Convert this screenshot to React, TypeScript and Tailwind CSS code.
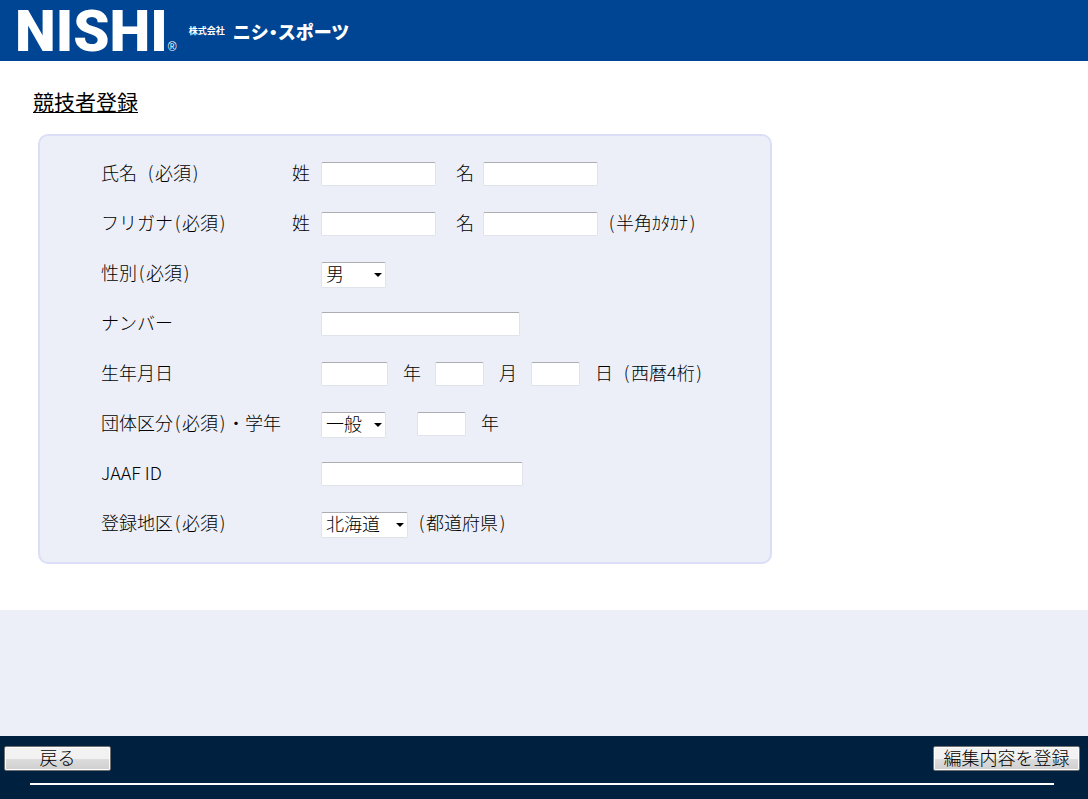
import { useState } from 'react'
import type { ReactNode } from 'react'

const genders = ['男', '女']
const categories = ['一般', '大学', '高校', '中学', '小学']
const prefectures = ['北海道', '青森', '岩手', '宮城', '東京', '大阪', '福岡']

const inputClass =
  'h-6 rounded-[2px] border border-[#e0e3ea] border-t-[#abadb3] bg-white px-1 outline-none focus:border-[#5794bf]'

// half-width characters, half the advance of a kanji
function Half({ children }: { children: ReactNode }) {
  return <span className="inline-block w-[9px] text-center">{children}</span>
}

function Required() {
  return (
    <>
      <Half>(</Half>必須<Half>)</Half>
    </>
  )
}

interface RowProps {
  label: ReactNode
  htmlFor: string
  hint?: string
  children: ReactNode
}

function Row({ label, htmlFor, hint, children }: RowProps) {
  return (
    <div className="flex h-[50px] items-center">
      <label htmlFor={htmlFor} className="w-[191px] shrink-0 pb-1 whitespace-nowrap">
        {label}
      </label>
      <label htmlFor={htmlFor} className="w-[29px] shrink-0 pb-1">
        {hint}
      </label>
      {children}
    </div>
  )
}

interface SelectProps {
  id: string
  options: string[]
  width: string
}

function Select({ id, options, width }: SelectProps) {
  const [value, setValue] = useState(options[0])

  return (
    <div className={`relative shrink-0 ${width}`}>
      <select
        id={id}
        value={value}
        onChange={(e) => setValue(e.target.value)}
        className="h-[26px] w-full appearance-none rounded-[2px] border border-[#e0e3ea] border-t-[#abadb3] bg-white pb-1 pl-1 leading-5 outline-none"
      >
        {options.map((option) => (
          <option key={option}>{option}</option>
        ))}
      </select>
      <svg className="pointer-events-none absolute top-3 right-1 h-1 w-2" viewBox="0 0 8 4">
        <path d="M0 0h8L4 4z" fill="black" />
      </svg>
    </div>
  )
}

function NameFields({ prefix, children }: { prefix: string; children?: ReactNode }) {
  return (
    <>
      <input id={`${prefix}-last`} type="text" className={`${inputClass} w-[115px]`} />
      <label htmlFor={`${prefix}-first`} className="mr-[9px] ml-5 pb-1">
        名
      </label>
      <input id={`${prefix}-first`} type="text" className={`${inputClass} w-[115px]`} />
      {children}
    </>
  )
}

function Header() {
  return (
    <header className="flex h-[61px] items-center bg-[#004593] pl-[15px] text-white">
      <span className="font-['Roboto',sans-serif] text-[58px] font-black">NISHI</span>
      <span className="mt-8 font-['Liberation_Sans',sans-serif] text-[12px]">®</span>
      <span className="ml-3 text-[9px] font-bold">株式会社</span>
      <span className="ml-2 text-[18px] font-black">
        ニシ<span className="[font-feature-settings:'halt']">・</span>スポーツ
      </span>
    </header>
  )
}

function Footer() {
  const buttonClass =
    'h-[25px] rounded-[2px] border border-[#707070] bg-linear-to-b from-[#f2f2f2] from-50% via-[#dddddd] via-50% to-[#cfcfcf] pb-1 leading-5 text-black shadow-[inset_0_0_0_1px_#fcfcfc]'

  return (
    <footer className="h-[63px] bg-[#00203f] pt-[10px]">
      <div className="flex justify-between pr-2 pl-1">
        <button type="button" className={`${buttonClass} w-[107px]`}>
          戻る
        </button>
        <button type="submit" form="athlete-form" className={`${buttonClass} w-[147px]`}>
          編集内容を登録
        </button>
      </div>
      <hr className="mt-3 mr-[34px] ml-[30px] border-t-2 border-white" />
    </footer>
  )
}

export default function App() {
  return (
    <div className="flex min-h-screen flex-col bg-[#eceff7] font-['Noto_Sans_CJK_JP',sans-serif] text-[18px] leading-6 font-light text-black">
      <Header />

      <main className="bg-white px-[38px] pt-[26px] pb-[46px]">
        <h1 className="-ml-[5px] text-[21px] leading-7 font-normal underline decoration-1 underline-offset-2">
          競技者登録
        </h1>

        <form
          id="athlete-form"
          onSubmit={(e) => e.preventDefault()}
          className="mt-[19px] w-full max-w-[734px] rounded-[10px] border-2 border-[#dcdef8] bg-[#eceff7] py-[13px] pl-[61px]"
        >
          <Row label={<>氏名<Half>&nbsp;</Half><Required /></>} htmlFor="name-last" hint="姓">
            <NameFields prefix="name" />
          </Row>

          <Row label={<>フリガナ<Required /></>} htmlFor="kana-last" hint="姓">
            <NameFields prefix="kana">
              <span className="ml-[9px] pb-1"><Half>(</Half>半角ｶﾀｶﾅ<Half>)</Half></span>
            </NameFields>
          </Row>

          <Row label={<>性別<Required /></>} htmlFor="gender">
            <Select id="gender" options={genders} width="w-[65px]" />
          </Row>

          <Row label="ナンバー" htmlFor="number">
            <input id="number" type="text" className={`${inputClass} w-[199px]`} />
          </Row>

          <Row label="生年月日" htmlFor="birth-year">
            <input id="birth-year" type="text" className={`${inputClass} w-[67px]`} />
            <label htmlFor="birth-year" className="mr-[14px] ml-[15px] pb-1">年</label>
            <input id="birth-month" type="text" className={`${inputClass} w-[49px]`} />
            <label htmlFor="birth-month" className="mr-[14px] ml-[15px] pb-1">月</label>
            <input id="birth-day" type="text" className={`${inputClass} w-[49px]`} />
            <label htmlFor="birth-day" className="ml-[15px] pb-1">
              日<Half>&nbsp;</Half><Half>(</Half>西暦4桁<Half>)</Half>
            </label>
          </Row>

          <Row label={<>団体区分<Required />・学年</>} htmlFor="category">
            <Select id="category" options={categories} width="w-[65px]" />
            <input id="grade" type="text" className={`${inputClass} ml-[31px] w-[49px]`} />
            <label htmlFor="grade" className="ml-[15px] pb-1">年</label>
          </Row>

          <Row label="JAAF ID" htmlFor="jaaf-id">
            <input id="jaaf-id" type="text" className={`${inputClass} w-[202px]`} />
          </Row>

          <Row label={<>登録地区<Required /></>} htmlFor="area">
            <Select id="area" options={prefectures} width="w-[87px]" />
            <label htmlFor="area" className="ml-[9px] pb-1"><Half>(</Half>都道府県<Half>)</Half></label>
          </Row>
        </form>
      </main>

      <div className="min-h-[126px] grow" />

      <Footer />
    </div>
  )
}
